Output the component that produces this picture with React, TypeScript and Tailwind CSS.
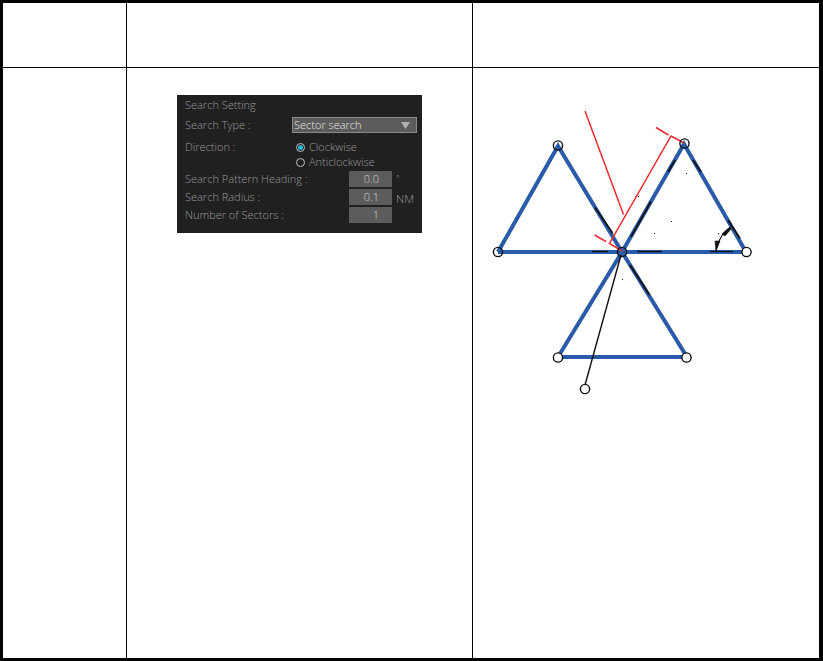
const font = { fontFamily: '"Open Sans", "Noto Sans", sans-serif' }

function Field({ label, value }: { label: string; value: string }) {
  return (
    <div className="flex h-[18px] items-center">
      <span className="w-[164px] whitespace-nowrap">{label}</span>
      <span className="flex h-[16px] w-[43px] items-center justify-end bg-[#5c5c5c] pr-[13px] text-[#d0d0d0]">{value}</span>
    </div>
  )
}

function SearchPanel() {
  return (
    <div style={font} className="relative ml-[50px] mt-[27px] h-[138px] w-[245px] bg-[#202020] pl-[8px] pt-[2px] text-[11px] font-light text-[#9a9a9a]">
      <div className="flex h-[16px] items-center">Search Setting</div>
      <div className="mt-[2px] flex h-[20px] items-center">
        <span className="w-[107px] shrink-0">Search Type :</span>
        <span className="flex h-[16px] w-[125px] shrink-0 items-center justify-between border border-[#8a8a8a] bg-[#5c5c5c] pl-[1px] pr-[6px] text-[#e8e8e8]">
          Sector search
          <svg width="9" height="7" viewBox="0 0 9 7"><path d="M0 0h9L4.5 7z" fill="#b0b0b0" /></svg>
        </span>
      </div>
      <div className="mt-[4px] flex h-[16px] items-center">
        <span className="w-[111px]">Direction :</span>
        <span className="flex items-center gap-[4px]">
          <span className="flex h-[9px] w-[9px] items-center justify-center rounded-full border border-[#c0c0c0]">
            <span className="h-[5px] w-[5px] rounded-full bg-[#22b8d8]" />
          </span>
          Clockwise
        </span>
      </div>
      <div className="flex h-[15px] items-center pl-[111px]">
        <span className="flex items-center gap-[4px]">
          <span className="h-[9px] w-[9px] rounded-full border border-[#c0c0c0]" />
          Anticlockwise
        </span>
      </div>
      <div className="flex flex-col">
        <Field label="Search Pattern Heading :" value="0.0" />
        <Field label="Search Radius :" value="0.1" />
        <Field label="Number of Sectors :" value="1" />
      </div>
      <span className="absolute left-[219px] top-[77px] text-[8px]">°</span>
      <span className="absolute left-[219px] top-[95px] text-[11.5px]">NM</span>
    </div>
  )
}

function Diagram() {
  const c = '622,252'
  return (
    <svg viewBox="473 68 346 590" className="block h-full w-full">
      {/* triangles */}
      <g fill="none" stroke="#2a5ba8" strokeWidth="4">
        <polyline points={`498,252 558,146 ${c}`} />
        <line x1="498" y1="252" x2="746" y2="252" />
        <polyline points={`${c} 684,144 746,252`} />
        <polyline points={`${c} 558,357 687,357 ${c}`} />
      </g>
      {/* black overdraw on the blue lines */}
      <g stroke="#111" strokeWidth="1.8">
        <line x1="595" y1="207.5" x2="612.5" y2="233" />
        <line x1="592" y1="251.5" x2="608" y2="251.5" strokeWidth="1.4" />
        <line x1="637" y1="251.5" x2="662" y2="251.5" strokeWidth="1.4" />
        <line x1="710" y1="251.5" x2="733" y2="251.5" strokeWidth="1.2" />
        <line x1="631" y1="237" x2="651" y2="201.5" />
        <line x1="668" y1="172" x2="675" y2="160" />
        <line x1="693" y1="160" x2="701" y2="172" />
        <line x1="728" y1="220" x2="740" y2="238.5" />
        <line x1="630" y1="265" x2="649.5" y2="295" />
        <line x1="621" y1="255" x2="585" y2="385" strokeWidth="1.4" />
      </g>
      {/* angle arc */}
      <path d="M731 227 Q720 233 716 250" fill="none" stroke="#111" strokeWidth="1.2" />
      <path d="M722 234 L730 227 L731 229 L725 236 Z M716 251 L715 241 L720 241 Z" fill="#111" stroke="#111" strokeWidth="0.6" />
      {/* red guides */}
      <g fill="none" stroke="#ee2a2e" strokeWidth="1.5">
        <line x1="585" y1="111" x2="623.5" y2="214.5" />
        <polyline points="622,251 609.5,243.5 671,136 684,143" />
        <line x1="656" y1="127.5" x2="668.5" y2="135" />
        <line x1="594.5" y1="235" x2="606" y2="241.5" />
      </g>
      {/* stray points */}
      <g fill="#111">
        <rect x="638" y="196" width="1" height="1" />
        <rect x="686" y="173" width="1" height="1" />
        <rect x="671" y="221" width="1" height="1" />
        <rect x="654" y="233" width="1" height="1" />
        <rect x="718" y="233" width="1" height="1" />
        <rect x="622" y="279" width="1" height="1" />
      </g>
      {/* waypoints */}
      <g fill="none" stroke="#111" strokeWidth="1.4">
        <circle cx="558" cy="145.5" r="4.6" />
        <circle cx="684.5" cy="143.5" r="4.6" />
        <circle cx="498" cy="252" r="4.6" />
        <circle cx="622" cy="252" r="4.6" />
        <circle cx="746.5" cy="252" r="4.6" fill="#fff" />
        <circle cx="558" cy="357.5" r="4.6" fill="#fff" />
        <circle cx="686.5" cy="357.5" r="4.6" fill="#fff" />
        <circle cx="585" cy="389" r="4.6" fill="#fff" />
      </g>
    </svg>
  )
}

export default function App() {
  return (
    <div className="h-[661px] w-[823px] border-b-[3px] border-l-[3px] border-r-[4px] border-t-[3px] border-black bg-white">
      <div className="grid h-full grid-cols-[124px_346px_1fr] grid-rows-[65px_1fr]">
        <div className="border-b border-r border-black" />
        <div className="border-b border-r border-black" />
        <div className="border-b border-black" />
        <div className="border-r border-black" />
        <div className="border-r border-black">
          <SearchPanel />
        </div>
        <div className="min-h-0">
          <Diagram />
        </div>
      </div>
    </div>
  )
}
